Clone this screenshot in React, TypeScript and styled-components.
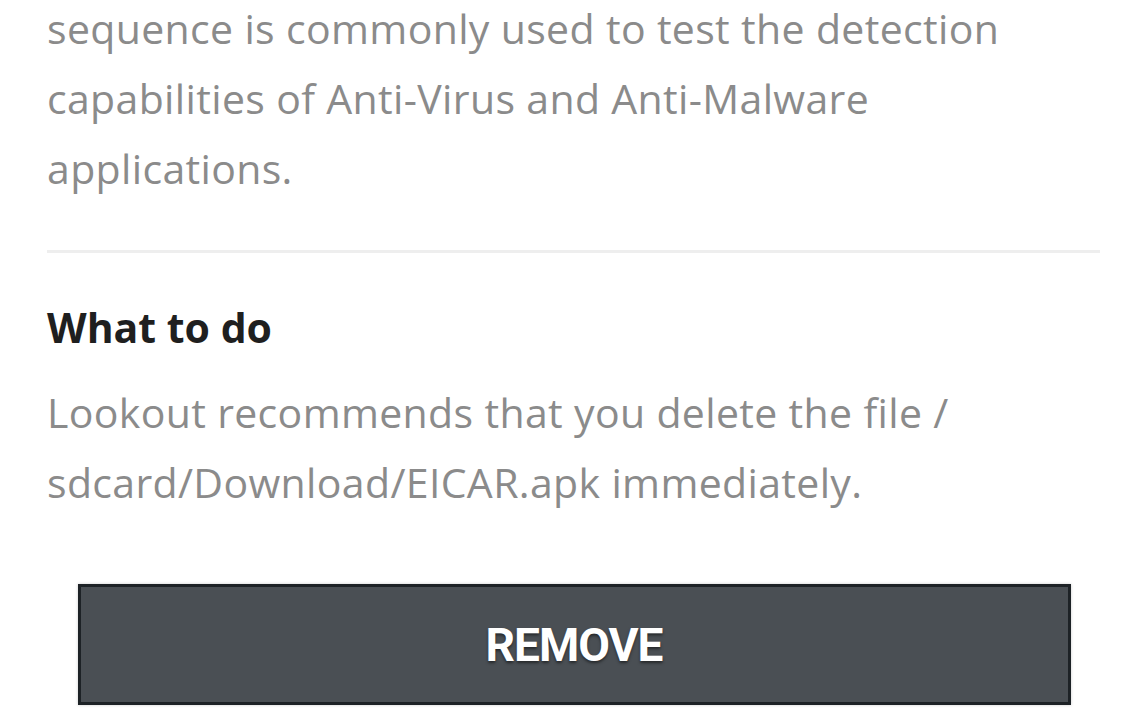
import React from "react";
import styled, { createGlobalStyle } from "styled-components";

const Global = createGlobalStyle`
  html, body { margin: 0; padding: 0; background: #ffffff; }
  body { font-family: "Open Sans", "Noto Sans", sans-serif; overflow: hidden; }
`;

const Page = styled.div`
  width: 1146px;
  height: 716px;
  box-sizing: border-box;
  padding: 0 46px 0 47px;
  display: flex;
  flex-direction: column;
  overflow: hidden;
`;

const Body = styled.p<{ $top?: number }>`
  margin: ${(p) => p.$top ?? 0}px 0 0 0;
  font-size: 41px;
  line-height: 70px;
  letter-spacing: 0.35px;
  color: #8b8b8b;
`;

const Divider = styled.hr`
  margin: 47px 0 0 0;
  border: none;
  height: 3px;
  background: #eeeeee;
  flex-shrink: 0;
`;

const Heading = styled.h3`
  margin: 49px 0 0 0;
  font-size: 41px;
  line-height: 50px;
  font-weight: 700;
  color: #1f1f1f;
`;

const ButtonRow = styled.div`
  display: flex;
  justify-content: center;
  margin-top: 67px;
  padding-left: 1px;
  flex-shrink: 0;
`;

const RemoveButton = styled.button`
  width: 993px;
  height: 121px;
  box-sizing: border-box;
  background: #4a4f54;
  border: 3px solid #1d2226;
  color: #ffffff;
  font-family: "Roboto", "Liberation Sans", sans-serif;
  font-weight: 700;
  font-size: 46px;
  letter-spacing: -1px;
  text-shadow: 0 2px 3px rgba(0, 0, 0, 0.5);
  box-shadow: 0 0 3px rgba(0, 0, 0, 0.2);
  cursor: pointer;
`;

export default function App() {
  return (
    <>
      <Global />
      <Page>
        <Body $top={-7}>
          sequence is commonly used to test the detection capabilities of
          Anti-Virus and Anti-Malware applications.
        </Body>
        <Divider />
        <Heading>What to do</Heading>
        <Body $top={25}>
          Lookout recommends that you delete the file /
          sdcard/Download/EICAR.apk immediately.
        </Body>
        <ButtonRow>
          <RemoveButton>REMOVE</RemoveButton>
        </ButtonRow>
      </Page>
    </>
  );
}
